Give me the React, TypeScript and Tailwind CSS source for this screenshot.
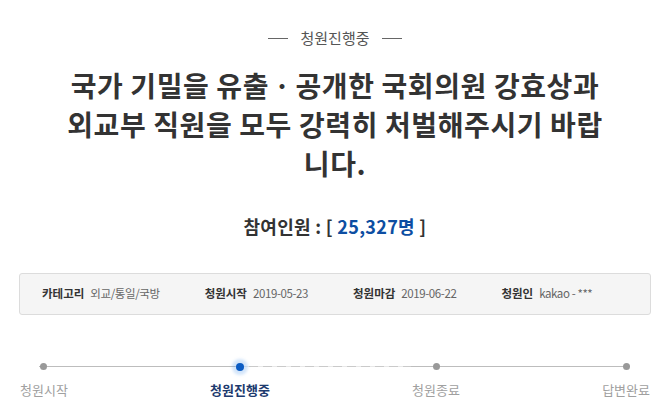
const steps = [
  { label: "청원시작", state: "done" },
  { label: "청원진행중", state: "active" },
  { label: "청원종료", state: "todo" },
  { label: "답변완료", state: "todo" },
];

const meta = [
  { label: "카테고리", value: "외교/통일/국방" },
  { label: "청원시작", value: "2019-05-23" },
  { label: "청원마감", value: "2019-06-22" },
  { label: "청원인", value: "kakao - ***" },
];

export default function App() {
  return (
    <div className="h-[420px] w-[670px] overflow-hidden bg-white font-['Noto_Sans_CJK_KR',sans-serif] text-[#333]">
      {/* status badge */}
      <div className="flex items-center justify-center gap-3 pt-[28px] text-[15px] leading-[20px] text-[#555]">
        <span className="h-px w-5 bg-[#666]" />
        <span>청원진행중</span>
        <span className="h-px w-5 bg-[#666]" />
      </div>

      <h1 className="mx-auto mt-[18px] w-[556px] break-all text-center text-[28px] font-bold leading-[39px] tracking-[0.6px] text-[#333]">
        국가 기밀을 유출ㆍ공개한 국회의원 강효상과 외교부 직원을 모두 강력히 처벌해주시기 바랍니다.
      </h1>

      <p className="mt-[31px] text-center text-[18px] font-bold leading-[24px] tracking-[0.3px] text-[#333]">
        참여인원 : [ <span className="text-[#0d4ea2]">25,327명</span> ]
      </p>

      <div className="mx-[19px] mt-[35px] flex h-[42px] items-center gap-[45px] rounded-[3px] border border-[#dcdcdc] bg-[#f5f5f5] px-[22px] text-[11.5px]">
        {meta.map((m) => (
          <div key={m.label} className="flex items-center gap-[6px]">
            <span className="font-bold text-[#333]">{m.label}</span>
            <span className="tracking-[-0.4px] text-[#666]">{m.value}</span>
          </div>
        ))}
      </div>

      {/* petition progress */}
      <div className="relative mx-5 mt-[48px]">
        <div className="absolute left-[19px] right-[20px] top-[3px] flex h-px">
          <div className="w-[196px] bg-[#bdbdbd]" />
          <div className="w-[176px] bg-[repeating-linear-gradient(90deg,#cacaca_0_9px,#e8e8e8_9px_14px)]" />
          <div className="flex-1 bg-[#bdbdbd]" />
        </div>
        <div className="relative flex justify-between">
          {steps.map((s) => (
            <div key={s.label} className="flex flex-col items-center">
              <div className="flex h-[7px] items-center justify-center">
                {s.state === "active" ? (
                  <span className="h-[8px] w-[8px] rounded-full bg-[#0b5cc4] shadow-[0_0_3px_4px_rgba(80,150,235,0.25)]" />
                ) : (
                  <span className="h-[7px] w-[7px] rounded-full bg-[#999]" />
                )}
              </div>
              <span
                className={
                  s.state === "active"
                    ? "mt-[11px] text-[13px] font-bold leading-[18px] text-[#1d3a6e]"
                    : "mt-[11px] text-[13px] leading-[18px] text-[#a0a0a0]"
                }
              >
                {s.label}
              </span>
            </div>
          ))}
        </div>
      </div>
    </div>
  );
}
